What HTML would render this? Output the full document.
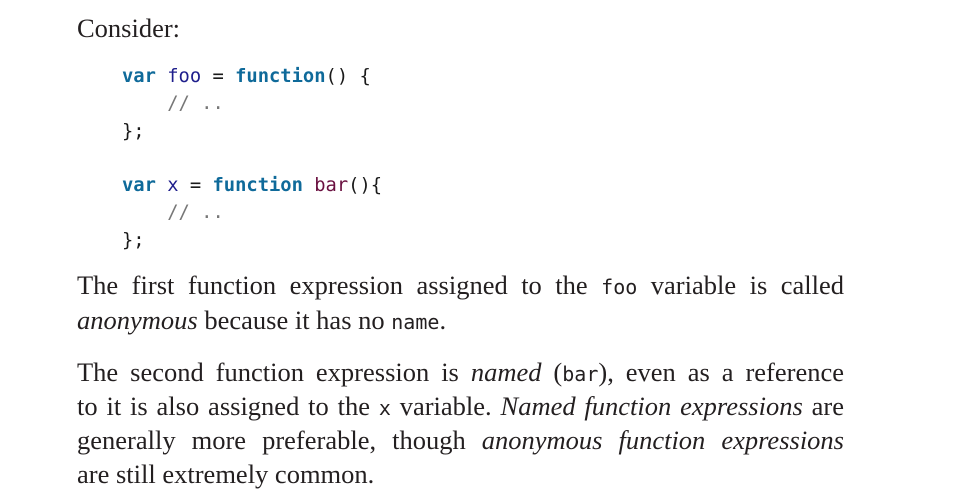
<!DOCTYPE html>
<html><head><meta charset="utf-8"><style>
body{margin:0;background:#fff;width:963px;height:500px;overflow:hidden;position:relative;color:#231f20;}
.t{position:absolute;left:77px;width:767px;font-family:"Liberation Serif",serif;font-size:26.5px;line-height:34px;white-space:nowrap;}
.j{text-align:justify;text-align-last:justify;white-space:normal;}
code,.m{font-family:"DejaVu Sans Mono","Liberation Mono",monospace;font-size:20px;}
pre{position:absolute;left:122px;top:63px;margin:0;font-family:"DejaVu Sans Mono","Liberation Mono",monospace;font-size:18.8px;line-height:27.3px;color:#1a1a1a;}
.k{color:#0f6a9a;font-weight:bold;}
.v{color:#1e1e8c;}
.b{color:#6a1040;}
.c{color:#777;}
i{font-style:italic;}
</style></head><body>
<div class="t" style="top:11px">Consider:</div>
<pre><span class="k">var</span> <span class="v">foo</span> = <span class="k">function</span>() {
    <span class="c">// ..</span>
};

<span class="k">var</span> <span class="v">x</span> = <span class="k">function</span> <span class="b">bar</span>(){
    <span class="c">// ..</span>
};</pre>
<div class="t j" style="top:268px">The first function expression assigned to the <code>foo</code> variable is called</div>
<div class="t" style="top:303px"><i>anonymous</i> because it has no <code>name</code>.</div>
<div class="t j" style="top:355px">The second function expression is <i>named</i> (<code>bar</code>), even as a reference</div>
<div class="t j" style="top:389px">to it is also assigned to the <code>x</code> variable. <i>Named function expressions</i> are</div>
<div class="t j" style="top:423px">generally more preferable, though <i>anonymous function expressions</i></div>
<div class="t" style="top:457px">are still extremely common.</div>
</body></html>
